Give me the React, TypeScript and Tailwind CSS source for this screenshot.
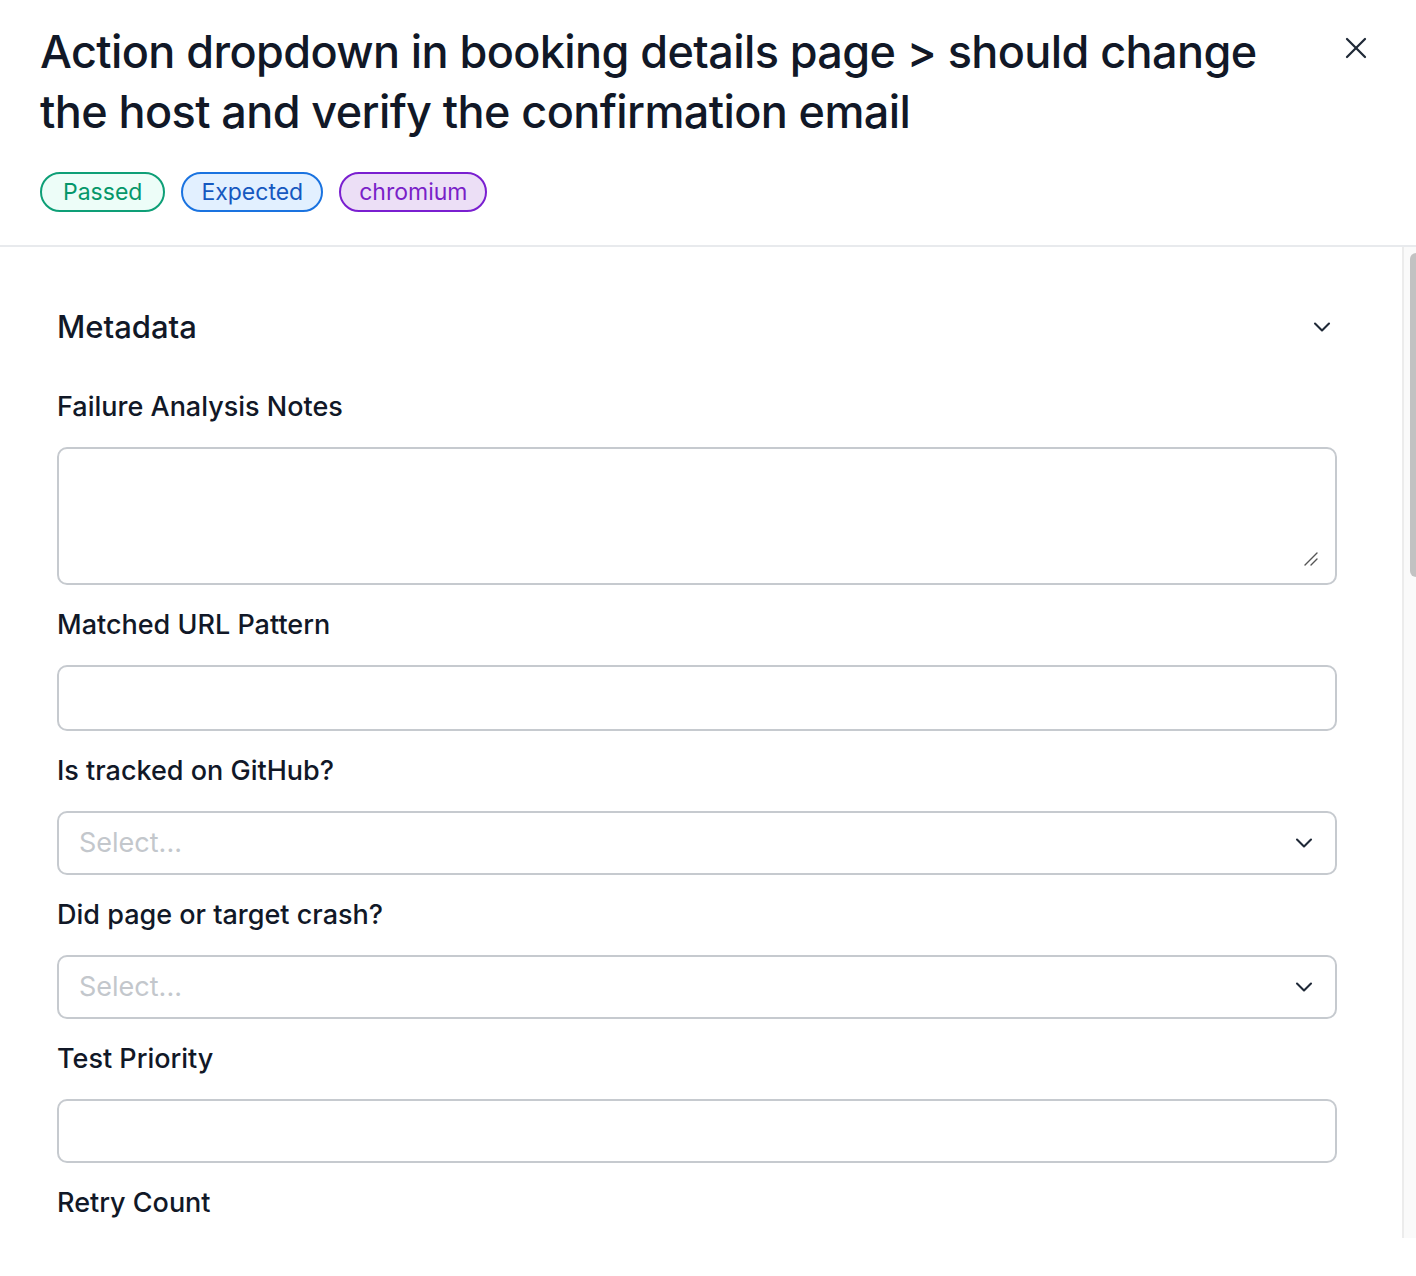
import { ChevronDown, X } from 'lucide-react';

const badges = [
  { label: 'Passed', cls: 'px-[21px] bg-[#edfdf8] border-[#0e9f77] text-[#05976a]' },
  { label: 'Expected', cls: 'px-[18px] bg-[#e2f0ff] border-[#1a73e0] text-[#1558c0]' },
  { label: 'chromium', cls: 'px-[18px] bg-[#ecdff6] border-[#7a1fd0] text-[#7a1fc8]' },
];

function Label({ children }: { children: React.ReactNode }) {
  return <label className="block text-[27px] leading-[36px] font-medium text-[#111827]">{children}</label>;
}

function TextInput({ tall }: { tall?: boolean }) {
  return (
    <input
      type="text"
      className={`block w-full rounded-[10px] border-2 border-[#c6cacf] bg-white px-5 text-[26px] outline-none ${
        tall ? 'h-[66px]' : 'h-[64px]'
      }`}
    />
  );
}

function SelectBox() {
  return (
    <div className="flex h-[64px] w-full items-center justify-between rounded-[10px] border-2 border-[#c6cacf] bg-white pl-[20px] pr-[17px]">
      <span className="text-[27px] text-[#c3c7cc]">Select...</span>
      <ChevronDown className="h-[28px] w-[28px] text-[#1f2937]" strokeWidth={1.8} />
    </div>
  );
}

export default function App() {
  return (
    <div className="h-[1276px] w-full overflow-hidden bg-white font-['Inter','Noto_Sans',sans-serif]">
      {/* Header */}
      <div className="border-b-2 border-[#e8eaed] px-[40px] pt-[22px] pb-[33px]">
        <div className="flex items-start justify-between">
          <h1 className="max-w-[1270px] text-[45px] leading-[60px] font-medium tracking-[-0.6px] text-[#111827]">
            Action dropdown in booking details page &gt; should change the host and verify the confirmation email
          </h1>
          <button className="mt-[8px] mr-[2px] text-[#1f2937]">
            <X className="h-[36px] w-[36px]" strokeWidth={1.5} />
          </button>
        </div>
        <div className="mt-[30px] flex gap-[16px]">
          {badges.map((b) => (
            <span
              key={b.label}
              className={`inline-flex h-[40px] items-center rounded-full border-2 text-[23px] leading-none ${b.cls}`}
            >
              {b.label}
            </span>
          ))}
        </div>
      </div>

      {/* Body */}
      <div className="flex h-[991px]">
        <div className="flex-1 overflow-hidden pl-[57px] pr-[65px] pt-[60px]">
          <div className="flex items-center justify-between">
            <h2 className="text-[31px] leading-[40px] font-medium text-[#111827]">Metadata</h2>
            <ChevronDown className="mr-[1px] h-[28px] w-[28px] text-[#1f2937]" strokeWidth={1.8} />
          </div>
          <div className="mt-[42px] flex flex-col gap-[22px]">
            <Label>Failure Analysis Notes</Label>
            <div className="relative">
              <textarea className="block h-[138px] w-full resize-none rounded-[10px] border-2 border-[#c6cacf] bg-white p-4 text-[26px] outline-none" />
              <svg className="pointer-events-none absolute bottom-[18px] right-[18px] h-[16px] w-[16px]" viewBox="0 0 16 16">
                <path d="M2 14 L14 2 M8 14 L14 8" stroke="#555" strokeWidth="1.4" strokeLinecap="round" />
              </svg>
            </div>
            <Label>Matched URL Pattern</Label>
            <TextInput tall />
            <Label>Is tracked on GitHub?</Label>
            <SelectBox />
            <Label>Did page or target crash?</Label>
            <SelectBox />
            <Label>Test Priority</Label>
            <TextInput />
            <Label>Retry Count</Label>
          </div>
        </div>
        {/* Scrollbar */}
        <div className="w-[14px] border-l-2 border-[#ececec] bg-[#fafafa] pt-[6px] pl-[6px]">
          <div className="h-[324px] w-full rounded-l-full bg-[#c2c2c2]" />
        </div>
      </div>
    </div>
  );
}
